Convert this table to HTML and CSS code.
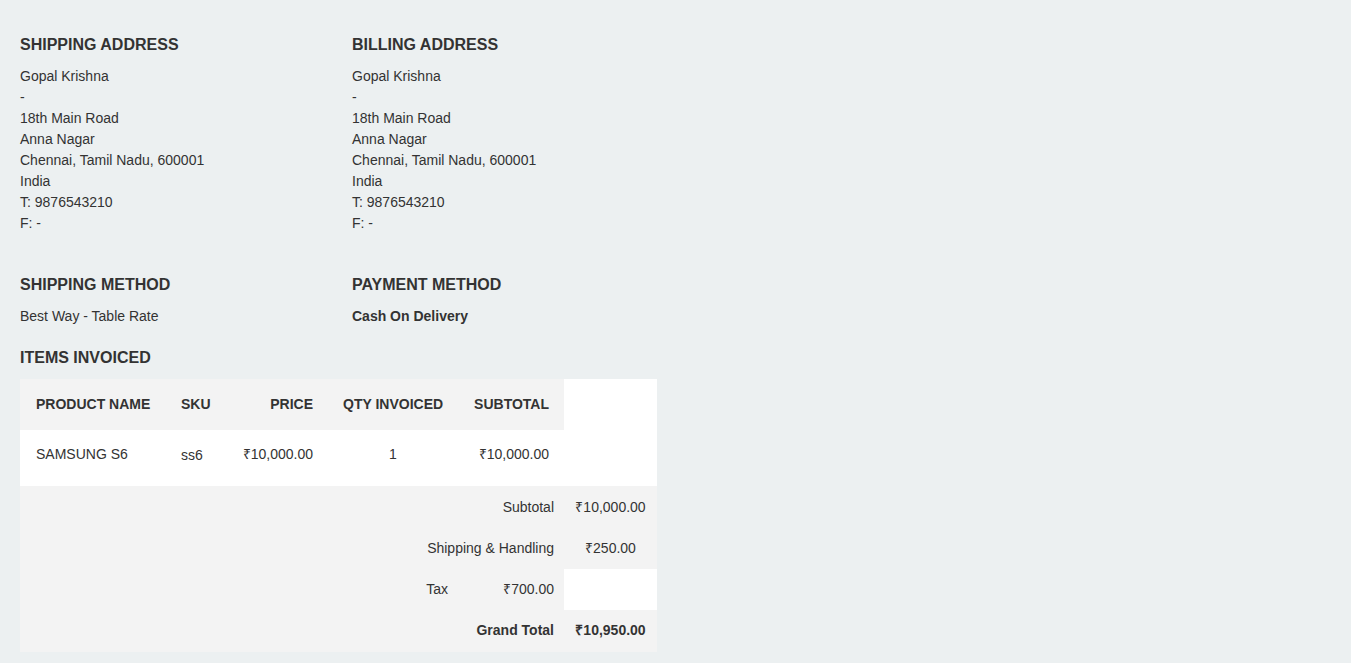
FILE: index.html
```html
<!DOCTYPE html>
<html lang="en">
<head>
    <meta charset="UTF-8">
    <meta name="viewport" content="width=device-width, initial-scale=1.0">
    <title>Invoice</title>
    <link rel="stylesheet" href="styles.css">
</head>
<body>
    <div class="invoice">
        <div class="info-grid">
            <div class="info-box">
                <h3>Shipping Address</h3>
                <address>
                    Gopal Krishna<br>
                    -<br>
                    18th Main Road<br>
                    Anna Nagar<br>
                    Chennai, Tamil Nadu, 600001<br>
                    India<br>
                    T: 9876543210<br>
                    F: -
                </address>
            </div>
            <div class="info-box">
                <h3>Billing Address</h3>
                <address>
                    Gopal Krishna<br>
                    -<br>
                    18th Main Road<br>
                    Anna Nagar<br>
                    Chennai, Tamil Nadu, 600001<br>
                    India<br>
                    T: 9876543210<br>
                    F: -
                </address>
            </div>
        </div>

        <div class="info-grid methods">
            <div class="info-box">
                <h3>Shipping Method</h3>
                <p>Best Way - Table Rate</p>
            </div>
            <div class="info-box">
                <h3>Payment Method</h3>
                <p class="strong">Cash On Delivery</p>
            </div>
        </div>

        <h3 class="items-title">Items Invoiced</h3>
        <table class="items">
            <colgroup>
                <col style="width: 146px">
                <col style="width: 61px">
                <col style="width: 101px">
                <col style="width: 130px">
                <col style="width: 106px">
                <col style="width: 93px">
            </colgroup>
            <thead>
                <tr>
                    <th class="first">Product Name</th>
                    <th>SKU</th>
                    <th class="right">Price</th>
                    <th class="center">Qty Invoiced</th>
                    <th class="right">Subtotal</th>
                </tr>
            </thead>
            <tbody>
                <tr>
                    <td class="first">SAMSUNG S6</td>
                    <td class="sku">ss6</td>
                    <td class="right">₹10,000.00</td>
                    <td class="center">1</td>
                    <td class="right">₹10,000.00</td>
                </tr>
            </tbody>
            <tfoot>
                <tr>
                    <td colspan="5" class="label">Subtotal</td>
                    <td class="amount">₹10,000.00</td>
                </tr>
                <tr>
                    <td colspan="5" class="label">Shipping &amp; Handling</td>
                    <td class="amount">₹250.00</td>
                </tr>
                <tr class="tax">
                    <td colspan="4" class="label">Tax</td>
                    <td class="label">₹700.00</td>
                </tr>
                <tr class="grand">
                    <td colspan="5" class="label">Grand Total</td>
                    <td class="amount">₹10,950.00</td>
                </tr>
            </tfoot>
        </table>
    </div>
</body>
</html>
```

FILE: styles.css
```css
body {
    margin: 0;
    background-color: #ecf0f1;
    color: #333333;
    font-family: "Liberation Sans", Arial, sans-serif;
    font-size: 14px;
    line-height: 21px;
}
.invoice {
    padding: 35px 20px 11px;
}
h3 {
    margin: 0 0 11px;
    font-size: 16px;
    line-height: 20px;
    font-weight: bold;
    text-transform: uppercase;
}
.info-grid {
    display: grid;
    grid-template-columns: 332px 332px;
}
.methods {
    margin-top: 41px;
}
address {
    font-style: normal;
}
p {
    margin: 0;
}
.strong {
    font-weight: bold;
}
.items-title {
    margin-top: 21px;
}
.items {
    width: 637px;
    table-layout: fixed;
    border-collapse: collapse;
    background: #ffffff;
}
.items th {
    background: #f3f3f3;
    padding: 15px;
    text-align: left;
    font-weight: bold;
    text-transform: uppercase;
    white-space: nowrap;
}
.items tbody td {
    padding: 14px 15px 21px;
    white-space: nowrap;
}
.items .first {
    padding-left: 16px;
}
.items .sku {
    padding-top: 15px;
    padding-bottom: 20px;
}
.items .right {
    text-align: right;
}
.items .center {
    text-align: center;
}
.items tfoot td {
    background: #f3f3f3;
    padding: 11px 10px 9px;
    white-space: nowrap;
}
.items tfoot tr:nth-child(2) td {
    padding-bottom: 10px;
}
.items tfoot .label {
    text-align: right;
}
.items tfoot .amount {
    text-align: center;
    padding-left: 0;
    padding-right: 0;
}
.items .tax td {
    padding-top: 10px;
    padding-bottom: 10px;
}
.items .grand td {
    padding-top: 10px;
    padding-bottom: 11px;
    font-weight: bold;
}
```
